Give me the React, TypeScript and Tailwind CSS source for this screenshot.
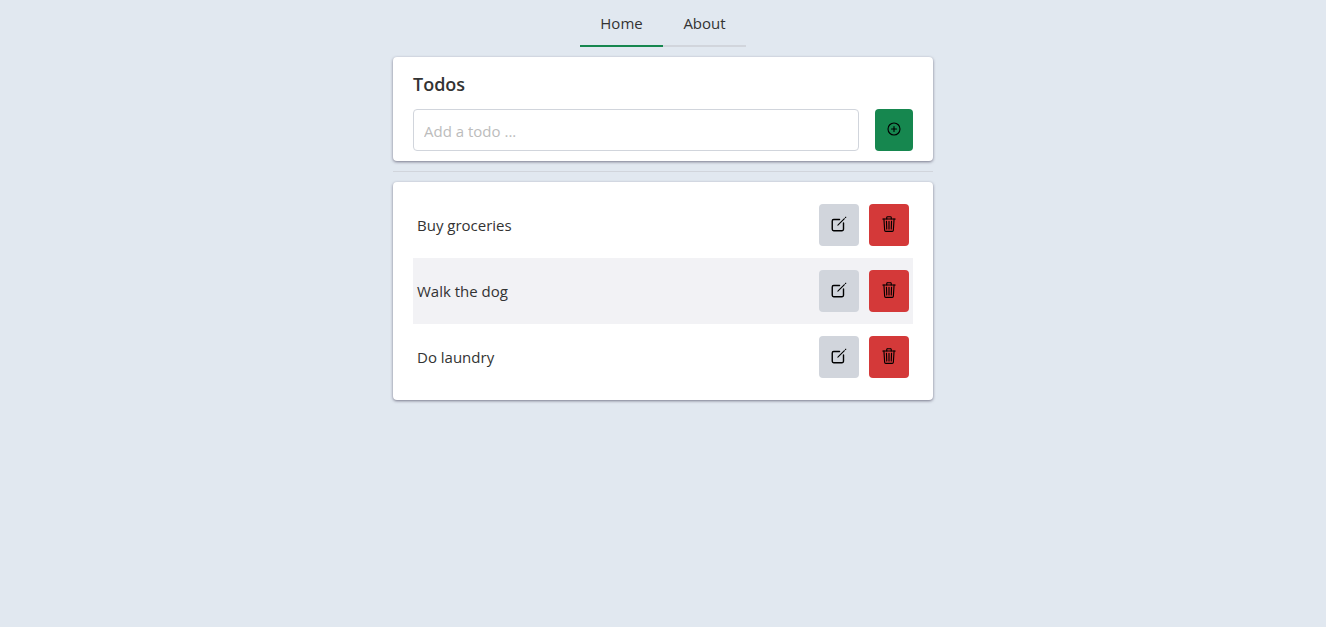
import { useState } from "react";
import type { FormEvent, ReactNode } from "react";
import { IoAddCircleOutline, IoCreateOutline, IoTrashOutline } from "react-icons/io5";

type Todo = { id: number; title: string };

const initialTodos: Todo[] = [
  { id: 1, title: "Buy groceries" },
  { id: 2, title: "Walk the dog" },
  { id: 3, title: "Do laundry" },
];

function Card({ children }: { children: ReactNode }) {
  return (
    <section className="rounded bg-white px-5 py-2.5 shadow-[0_1px_3px_rgba(50,45,70,0.6)]">
      {children}
    </section>
  );
}

function TodoRow({ todo, onRemove }: { todo: Todo; onRemove: () => void }) {
  return (
    <li className="flex items-center justify-between px-1 py-3 even:bg-[#f2f2f5]">
      <span>{todo.title}</span>
      <div className="flex gap-2.5">
        <button
          type="button"
          aria-label={`Edit ${todo.title}`}
          className="flex h-[42px] w-10 items-center justify-center rounded bg-[#d1d5dc] pb-0.5 text-black"
        >
          <IoCreateOutline size={18} className="[&_path:first-child]:[stroke-width:40px]" />
        </button>
        <button
          type="button"
          aria-label={`Delete ${todo.title}`}
          onClick={onRemove}
          className="flex h-[42px] w-10 items-center justify-center rounded bg-[#d43939] pb-0.5 text-black"
        >
          <IoTrashOutline size={18} />
        </button>
      </div>
    </li>
  );
}

export default function App() {
  const [todos, setTodos] = useState(initialTodos);
  const [title, setTitle] = useState("");

  const addTodo = (event: FormEvent) => {
    event.preventDefault();
    if (!title.trim()) return;
    setTodos([...todos, { id: Date.now(), title: title.trim() }]);
    setTitle("");
  };

  return (
    <div className="min-h-screen bg-[#e1e8f0] font-['Open_Sans','Noto_Sans',sans-serif] text-[15px] leading-6 text-[#333333]">
      <nav className="flex justify-center">
        <a
          href="#home"
          className="min-w-[83px] border-b-2 border-[#16874f] px-5 pt-[11px] pb-2.5 text-center"
        >
          Home
        </a>
        <a
          href="#about"
          className="min-w-[83px] border-b-2 border-[#d1d5dc] px-5 pt-[11px] pb-2.5 text-center"
        >
          About
        </a>
      </nav>
      <main className="mx-auto mt-2.5 flex max-w-[540px] flex-col gap-2.5">
        <Card>
          <h1 className="mb-2 text-lg leading-[34px] font-semibold">Todos</h1>
          <form onSubmit={addTodo} className="flex gap-4">
            <input
              type="text"
              aria-label="New todo"
              placeholder="Add a todo ..."
              value={title}
              onChange={(event) => setTitle(event.target.value)}
              className="h-[42px] min-w-0 grow rounded border border-[#d1d5dc] bg-white px-2.5 pt-0.5 placeholder:text-[#bcbcbc]"
            />
            <button
              type="submit"
              aria-label="Add todo"
              className="flex h-[42px] w-[38px] items-center justify-center rounded bg-[#16874f] pb-0.5 text-black"
            >
              <IoAddCircleOutline size={16} className="[&_path]:[stroke-width:36px]" />
            </button>
          </form>
        </Card>
        <hr className="border-[#d1d5dc]" />
        <Card>
          <ul>
            {todos.map((todo) => (
              <TodoRow
                key={todo.id}
                todo={todo}
                onRemove={() => setTodos(todos.filter((item) => item.id !== todo.id))}
              />
            ))}
          </ul>
        </Card>
      </main>
    </div>
  );
}
